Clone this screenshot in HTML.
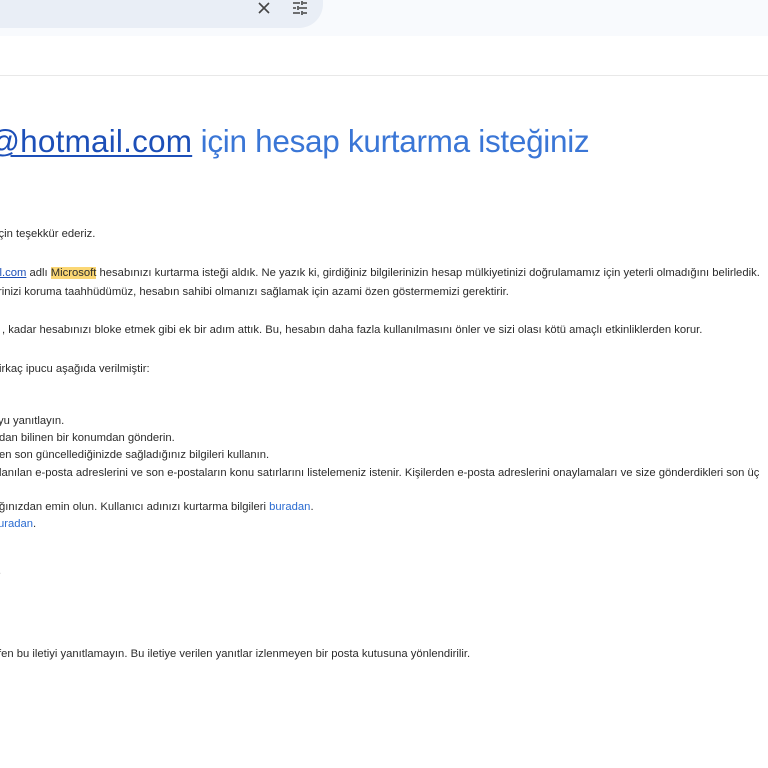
<!DOCTYPE html>
<html><head><meta charset="utf-8"><style>
html,body{margin:0;padding:0;width:768px;height:768px;overflow:hidden;background:#fff;font-family:"Liberation Sans","DejaVu Sans",sans-serif;}
.top{position:absolute;left:0;top:0;width:768px;height:36px;background:#f8fafd;}
.search{position:absolute;left:-20px;top:-20px;width:343px;height:48px;background:#e9eef6;border-radius:0 0 24px 0;}
.div{position:absolute;left:0;top:75px;width:768px;height:1px;background:#e8e8e8;}
.t{position:absolute;white-space:nowrap;font-size:11.25px;line-height:14px;color:#2b2b2b;}
.title{position:absolute;left:-12px;top:120px;font-size:31.5px;line-height:42px;color:#3a76d6;white-space:nowrap;letter-spacing:-0.3px;}
.title u{color:#1c4fb8;text-decoration-thickness:2px;text-underline-offset:3px;letter-spacing:0.2px;}
a{color:#2a6bd1;text-decoration:none;}
.hl{background:#fbd774;}
</style></head><body>
<div class="top"></div>
<div class="search"></div>
<svg style="position:absolute;left:257px;top:1px" width="14" height="14" viewBox="0 0 14 14"><path d="M2 2L12 12M12 2L2 12" stroke="#444" stroke-width="1.6"/></svg>
<svg style="position:absolute;left:292px;top:0px" width="16" height="16" viewBox="0 0 16 16" fill="none" stroke="#444" stroke-width="1.6"><path d="M1 3H8M11 3H15M10 1V5M1 8H4M7 8H15M6 6V10M1 13H8M11 13H15M10 11V15"/></svg>
<div class="div"></div>
<div class="title"><u>@hotmail.com</u> için hesap kurtarma isteğiniz</div>
<div class="t" style="left:-4px;top:227px">için teşekkür ederiz.</div>
<div class="t" style="left:-3px;top:266px"><span style="color:#1c4fb8;text-decoration:underline">il.com</span> adlı <span class="hl">Microsoft</span> hesabınızı kurtarma isteği aldık. Ne yazık ki, girdiğiniz bilgilerinizin hesap mülkiyetinizi doğrulamamız için yeterli olmadığını belirledik.</div>
<div class="t" style="left:-2px;top:285px">rinizi koruma taahhüdümüz, hesabın sahibi olmanızı sağlamak için azami özen göstermemizi gerektirir.</div>
<div class="t" style="left:2px;top:323px">, kadar hesabınızı bloke etmek gibi ek bir adım attık. Bu, hesabın daha fazla kullanılmasını önler ve sizi olası kötü amaçlı etkinliklerden korur.</div>
<div class="t" style="left:-1px;top:362px">irkaç ipucu aşağıda verilmiştir:</div>
<div class="t" style="left:-2px;top:414px">yu yanıtlayın.</div>
<div class="t" style="left:-1px;top:431px">dan bilinen bir konumdan gönderin.</div>
<div class="t" style="left:-1px;top:448px">en son güncellediğinizde sağladığınız bilgileri kullanın.</div>
<div class="t" style="left:-1px;top:466px">lanılan e-posta adreslerini ve son e-postaların konu satırlarını listelemeniz istenir. Kişilerden e-posta adreslerini onaylamaları ve size gönderdikleri son üç</div>
<div class="t" style="left:-1px;top:500px">ğınızdan emin olun. Kullanıcı adınızı kurtarma bilgileri <a>buradan</a>.</div>
<div class="t" style="left:-2px;top:517px"><a>uradan</a>.</div>
<div class="t" style="left:-2px;top:564px">.</div>
<div class="t" style="left:-2px;top:647px">fen bu iletiyi yanıtlamayın. Bu iletiye verilen yanıtlar izlenmeyen bir posta kutusuna yönlendirilir.</div>
</body></html>
